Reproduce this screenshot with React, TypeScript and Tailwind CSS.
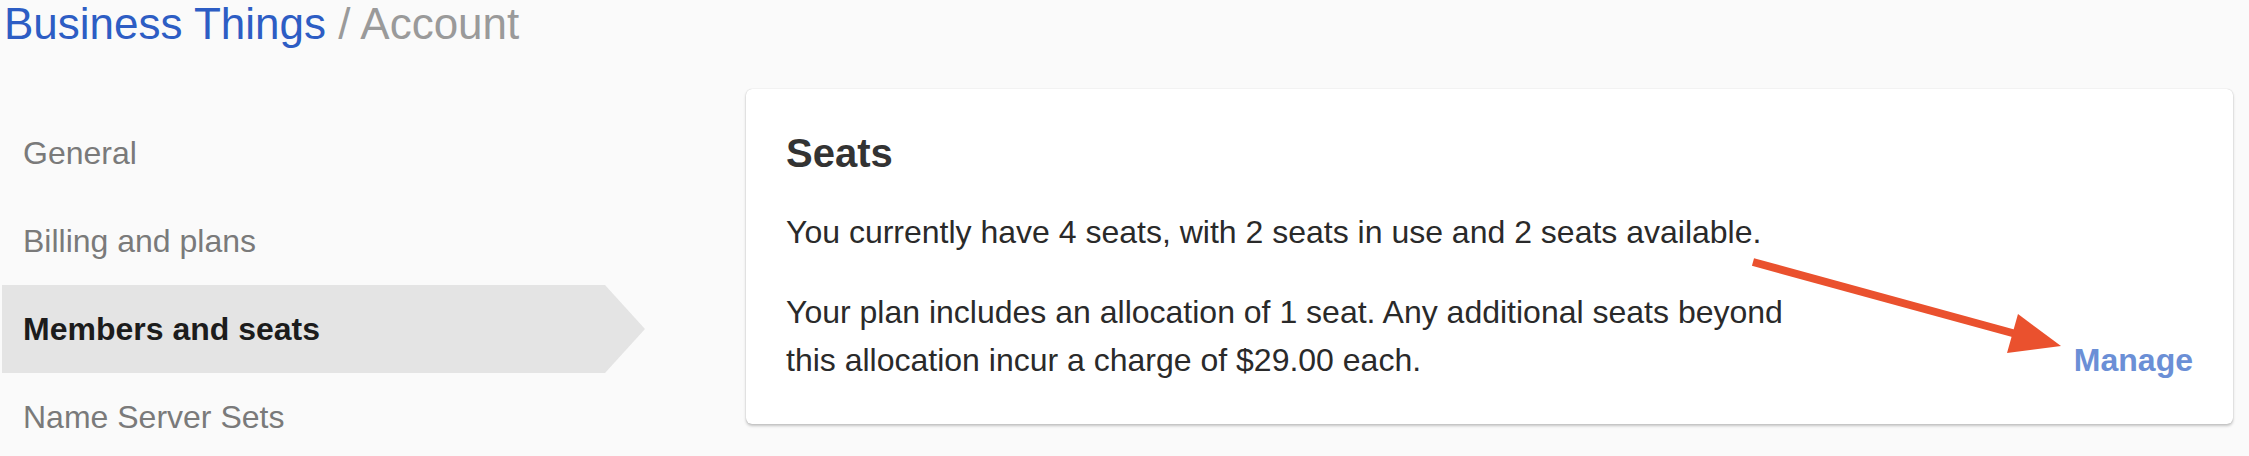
const navItems = [
  { label: "General", active: false },
  { label: "Billing and plans", active: false },
  { label: "Members and seats", active: true },
  { label: "Name Server Sets", active: false },
];

function AnnotationArrow() {
  return (
    <svg
      className="pointer-events-none absolute left-[1740px] top-[250px]"
      width="330"
      height="115"
      viewBox="0 0 330 115"
    >
      <line x1="13" y1="12" x2="276" y2="84" stroke="#ea512e" strokeWidth="8" />
      <polygon points="278,64 321,96 267,103" fill="#ea512e" />
    </svg>
  );
}

export default function App() {
  return (
    <div
      className="relative min-h-screen bg-[#fafafa] text-[#333]"
      style={{ fontFamily: '"Liberation Sans", Arial, sans-serif' }}
    >
      <h1 className="pl-[4px] pt-[2px] text-[44px] leading-none">
        <span className="text-[#2d5dc4]">Business Things</span>
        <span className="text-[#9a9a9a]"> / Account</span>
      </h1>

      <div className="mt-[43px] flex">
        <nav className="ml-[2px] w-[643px] shrink-0 pt-[20px]">
          {navItems.map((item) =>
            item.active ? (
              <div
                key={item.label}
                className="flex h-[88px] items-center bg-[#e4e4e4] pl-[21px] text-[32px] font-bold text-[#1c1c1c] [clip-path:polygon(0_0,603px_0,643px_50%,603px_100%,0_100%)]"
              >
                {item.label}
              </div>
            ) : (
              <div key={item.label} className="flex h-[88px] items-center pl-[21px] text-[32px] text-[#7a7a7a]">
                {item.label}
              </div>
            )
          )}
        </nav>

        <section className="ml-[101px] mr-[16px] flex-1 self-start rounded-[6px] bg-white p-[40px] shadow-[0_0_1px_rgba(0,0,0,0.25),0_2px_3px_rgba(0,0,0,0.22)]">
          <div className="flex items-end justify-between">
            <div className="max-w-[1040px]">
              <h2 className="text-[40px] font-bold leading-[48px] text-[#333]">Seats</h2>
              <p className="mt-[31px] text-[32px] leading-[48px] text-[#2a2a2a]">
                You currently have 4 seats, with 2 seats in use and 2 seats available.
              </p>
              <p className="mt-[32px] text-[32px] leading-[48px] text-[#2a2a2a]">
                Your plan includes an allocation of 1 seat. Any additional seats beyond this allocation incur a charge of
                $29.00 each.
              </p>
            </div>
            <a href="#" className="text-[32px] font-bold leading-[48px] text-[#6b8fd6]">
              Manage
            </a>
          </div>
        </section>
      </div>

      <AnnotationArrow />
    </div>
  );
}
